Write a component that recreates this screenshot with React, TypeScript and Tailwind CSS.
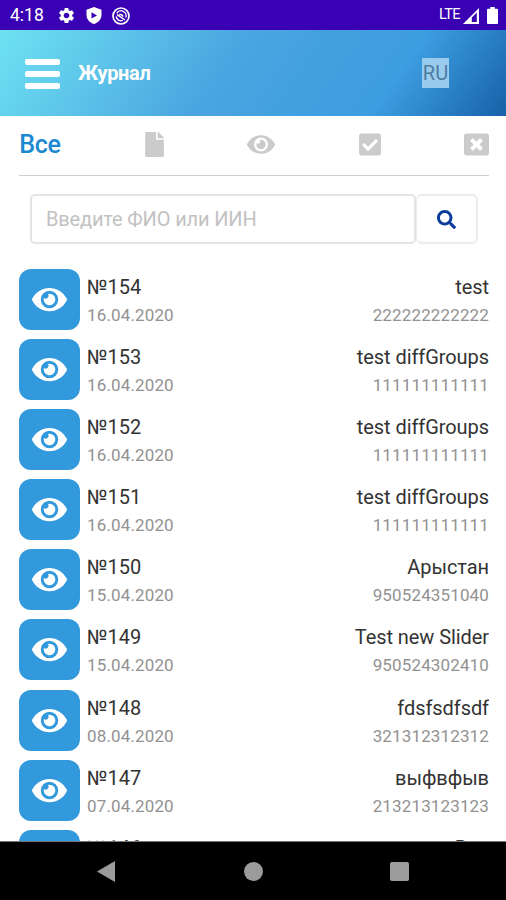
import { FaCheckSquare, FaEye, FaFile, FaSearch, FaWindowClose } from 'react-icons/fa';
import { MdSettings } from 'react-icons/md';

interface Entry {
  id: number;
  date: string;
  name: string;
  iin: string;
}

const entries: Entry[] = [
  { id: 154, date: '16.04.2020', name: 'test', iin: '222222222222' },
  { id: 153, date: '16.04.2020', name: 'test diffGroups', iin: '111111111111' },
  { id: 152, date: '16.04.2020', name: 'test diffGroups', iin: '111111111111' },
  { id: 151, date: '16.04.2020', name: 'test diffGroups', iin: '111111111111' },
  { id: 150, date: '15.04.2020', name: 'Арыстан', iin: '950524351040' },
  { id: 149, date: '15.04.2020', name: 'Test new Slider', iin: '950524302410' },
  { id: 148, date: '08.04.2020', name: 'fdsfsdfsdf', iin: '321312312312' },
  { id: 147, date: '07.04.2020', name: 'выфвфыв', iin: '213213123123' },
];

function StatusBar() {
  return (
    <div className="flex h-[30px] shrink-0 items-center justify-between bg-[#3a00b3] pt-px pr-[8px] pl-[10px] text-white">
      <div className="flex items-center">
        <span className="w-[47px] text-[17.5px] leading-none">4:18</span>
        <MdSettings className="size-[19px]" />
        <svg className="ml-[10px] h-[17px] w-[16px]" viewBox="0 0 16 17">
          <path
            fill="currentColor"
            fillRule="evenodd"
            d="M8 0L15.5 2.8V8C15.5 12.3 12.5 15.6 8 17C3.5 15.6 .5 12.3 .5 8V2.8ZM5.5 5.2V11.6L11 8.4Z"
          />
        </svg>
        <svg className="ml-[10px] size-[18px]" viewBox="0 0 18 18" fill="none" stroke="currentColor">
          <circle cx="9" cy="9" r="8" strokeWidth="1.7" />
          <path d="M4.8 6.3A5 5 0 0 1 13.8 10.6M4.2 9.4A4.8 4.8 0 0 0 10.8 13.4" strokeWidth="1.4" />
          <path d="M5 7.6L13 13M7.2 7.8Q9.8 6.8 11.2 9.6" strokeWidth="1.5" />
        </svg>
      </div>
      <div className="flex items-center">
        <span className="text-[14.5px] leading-none tracking-[-0.6px]">LTE</span>
        <svg className="ml-[3px] h-[16px] w-[16px]" viewBox="0 0 16 16">
          <path fill="currentColor" fillRule="evenodd" d="M0 16L16 0V16ZM8.8 9.4V14H13.8V4.4Z" />
        </svg>
        <svg className="ml-[8px] h-[17px] w-[11px]" viewBox="0 0 11 17">
          <path
            fill="currentColor"
            d="M3.3 0H7.7V1.8H10Q11 1.8 11 2.8V16Q11 17 10 17H1Q0 17 0 16V2.8Q0 1.8 1 1.8H3.3Z"
          />
        </svg>
      </div>
    </div>
  );
}

function Header() {
  return (
    <header className="flex h-[86px] shrink-0 items-center bg-[linear-gradient(125deg,#6ee2f2_0%,#4aa4e0_45%,#3c9de0_76%,#1761a8_100%)] pr-[57px] pl-[25px]">
      <button className="flex w-[35px] flex-col gap-[6px] pt-px">
        <span className="h-[6px] w-full rounded-[2px] bg-white" />
        <span className="h-[6px] w-full rounded-[2px] bg-white" />
        <span className="h-[6px] w-full rounded-[2px] bg-white" />
      </button>
      <h1 className="ml-[18px] text-[20px] leading-none font-bold tracking-[-0.3px] text-white">Журнал</h1>
      <button className="ml-auto flex h-[30px] w-[27px] items-center justify-center bg-[#99cbee] text-[20px] leading-none text-[#4f7ca0]">
        RU
      </button>
    </header>
  );
}

function Tabs() {
  return (
    <nav className="mr-[17px] ml-[19px] flex h-[60px] shrink-0 items-center justify-between border-b border-[#cfcfcf] pb-[2px] text-[#cbcbcb]">
      <button className="w-[42px] text-[25px] leading-none font-medium tracking-[-0.3px] text-[#1b89d2]">Все</button>
      <FaFile className="h-[25px] w-[19px]" />
      <FaEye className="h-[25px] w-[28px]" />
      <FaCheckSquare className="h-[25px] w-[22px]" />
      <FaWindowClose className="size-[25px]" />
    </nav>
  );
}

function Search() {
  return (
    <div className="mx-[30px] mt-[18px] flex h-[50px] w-[448px] shrink-0">
      <input
        className="w-[386px] rounded-[5px] border-2 border-[#e4e4e4] px-[14px] text-[20px] tracking-[-0.15px] placeholder:text-[#c2c2c2]"
        placeholder="Введите ФИО или ИИН"
      />
      <button className="flex flex-1 items-center justify-center rounded-[6px] border-2 border-l border-[#ebebeb] text-[#0b3c9c]">
        <FaSearch className="size-[19px]" />
      </button>
    </div>
  );
}

function Row({ entry }: { entry: Entry }) {
  return (
    <li className="flex h-[61px] shrink-0">
      <button className="flex w-[61px] shrink-0 items-center justify-center rounded-[12px] bg-[#3299dc] text-white">
        <FaEye className="h-[31px] w-[35px]" />
      </button>
      <div className="ml-[7px] flex-1 pt-[4px]">
        <p className="flex justify-between text-[20px] leading-[28px] text-[#333]">
          <span>№{entry.id}</span>
          <span className="tracking-[-0.07px]">{entry.name}</span>
        </p>
        <p className="flex justify-between text-[17px] leading-[28px] tracking-[0.14px] text-[#929292]">
          <span>{entry.date}</span>
          <span>{entry.iin}</span>
        </p>
      </div>
    </li>
  );
}

function NavigationBar() {
  return (
    <div className="flex h-[59px] shrink-0 items-center justify-between border-t border-[#777] bg-black px-[97px] text-[#9b9b9b]">
      <svg className="h-[21px] w-[18px]" viewBox="0 0 18 21">
        <path fill="currentColor" d="M0 10.5L18 0V21Z" />
      </svg>
      <span className="ml-[2px] size-[19px] rounded-full bg-[#9b9b9b]" />
      <span className="size-[19px] rounded-[2px] bg-[#9b9b9b]" />
    </div>
  );
}

export default function App() {
  return (
    <div className="flex h-[900px] w-[506px] flex-col overflow-hidden bg-white font-['Roboto','Noto_Sans',sans-serif]">
      <StatusBar />
      <Header />
      <Tabs />
      <Search />
      <ul className="mt-[25px] mr-[17px] ml-[19px] flex min-h-0 flex-1 flex-col gap-[9.1px] overflow-hidden">
        {entries.map((entry) => (
          <Row key={entry.id} entry={entry} />
        ))}
        {/* next row, mostly hidden under the navigation bar */}
        <li className="flex h-[61px] shrink-0">
          <span className="w-[61px] rounded-[12px] bg-[#3299dc]" />
          <p className="ml-[7px] flex flex-1 justify-between pt-[4px] text-[20px] leading-[28px] text-[#333]">
            <span>№146</span>
            <span>test new Reg</span>
          </p>
        </li>
      </ul>
      <NavigationBar />
    </div>
  );
}
